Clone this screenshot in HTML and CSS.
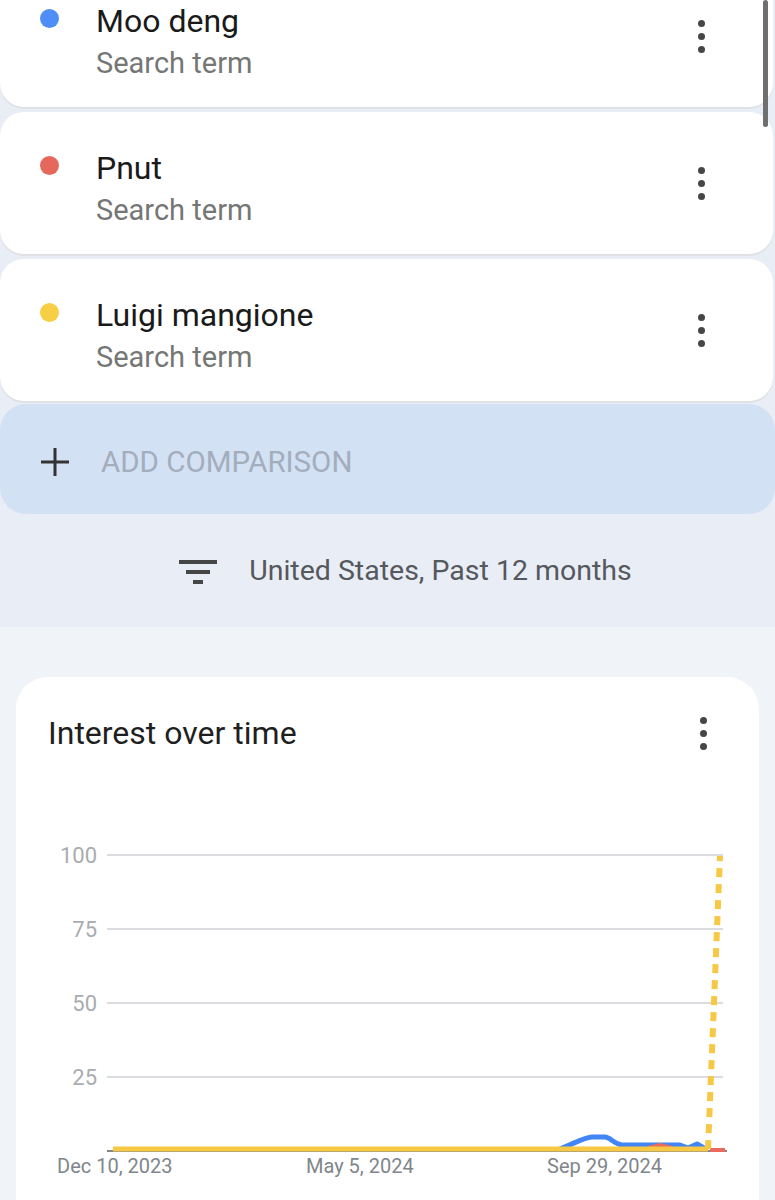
FILE: index.html
```html
<!DOCTYPE html>
<html lang="en">
  <head>
    <meta charset="utf-8" />
    <meta name="viewport" content="width=device-width,initial-scale=1.0" />
    <title>Explore - Google Trends</title>
    <link rel="stylesheet" href="styles.css">
  </head>
  <body>
    <div class="scrollbar"></div>

    <!-- compared terms -->
    <div class="top">
      <div class="terms">
        <div class="term">
          <span class="dot dot-blue"></span>
          <div class="term-text">
            <div class="term-name">Moo deng</div>
            <div class="term-kind">Search term</div>
          </div>
          <div class="kebab"><i></i><i></i><i></i></div>
        </div>
        <div class="term">
          <span class="dot dot-red"></span>
          <div class="term-text">
            <div class="term-name">Pnut</div>
            <div class="term-kind">Search term</div>
          </div>
          <div class="kebab"><i></i><i></i><i></i></div>
        </div>
        <div class="term">
          <span class="dot dot-yellow"></span>
          <div class="term-text">
            <div class="term-name">Luigi mangione</div>
            <div class="term-kind">Search term</div>
          </div>
          <div class="kebab"><i></i><i></i><i></i></div>
        </div>
      </div>

      <div class="add-comparison">
        <svg class="plus" width="30" height="30" viewBox="0 0 30 30">
          <path d="M15 1v28M1 15h28" stroke="#333" stroke-width="3" fill="none" />
        </svg>
        <span>ADD COMPARISON</span>
      </div>

      <div class="filters">
        <svg class="filter-icon" width="38" height="26" viewBox="0 0 38 26">
          <rect x="0" y="0" width="38" height="4" fill="#444746" />
          <rect x="7" y="10" width="24" height="4" fill="#444746" />
          <rect x="14" y="20" width="10" height="4" fill="#444746" />
        </svg>
        <span>United States, Past 12 months</span>
      </div>
    </div>

    <!-- interest over time -->
    <div class="bottom">
      <div class="chart-card">
        <div class="chart-head">
          <div class="chart-title">Interest over time</div>
          <div class="kebab"><i></i><i></i><i></i></div>
        </div>
        <svg class="chart" width="743" height="420" viewBox="16 780 743 420">
          <g stroke="#dadce0" stroke-width="2">
            <line x1="107" y1="855" x2="723" y2="855" />
            <line x1="107" y1="929" x2="723" y2="929" />
            <line x1="107" y1="1003" x2="723" y2="1003" />
            <line x1="107" y1="1077" x2="723" y2="1077" />
          </g>
          <line x1="107" y1="1151" x2="727" y2="1151" stroke="#80868b" stroke-width="2" />
          <g class="y-label" text-anchor="end">
            <text x="97" y="863">100</text>
            <text x="97" y="937">75</text>
            <text x="97" y="1011">50</text>
            <text x="97" y="1085">25</text>
          </g>
          <g class="x-label">
            <text x="57" y="1173">Dec 10, 2023</text>
            <text x="306" y="1173">May 5, 2024</text>
            <text x="547" y="1173">Sep 29, 2024</text>
          </g>
          <path d="M560 1149 C575 1143 585 1137 592 1137 L605 1137 C610 1137 614 1144 622 1145 L680 1145 L688 1148 L697 1144 L704 1148"
            fill="none" stroke="#4285f4" stroke-width="5" stroke-linejoin="round" />
          <polyline points="648,1148 660,1145 672,1148" fill="none" stroke="#ea6b5e" stroke-width="4" />
          <line x1="710" y1="1150" x2="725" y2="1150" stroke="#ea6b5e" stroke-width="4" />
          <line x1="113" y1="1149" x2="708" y2="1149" stroke="#f6c844" stroke-width="5" />
          <line x1="708" y1="1149" x2="720" y2="856" stroke="#f6c844" stroke-width="6" stroke-dasharray="9 7" />
        </svg>
      </div>
    </div>
  </body>
</html>
```

FILE: styles.css
```css
html, body {
  margin: 0;
  padding: 0;
}
body {
  background: #f0f3f8;
  font-family: Roboto, "Liberation Sans", sans-serif;
  color: #1f1f1f;
  overflow: hidden;
}
.scrollbar {
  position: absolute;
  top: 0;
  left: 763px;
  width: 5px;
  height: 127px;
  border-radius: 3px;
  background: #6f6f6f;
  z-index: 2;
}
.top {
  background: #e9eef6;
}
.terms {
  display: flex;
  flex-direction: column;
  gap: 5px;
  margin-top: -35px;
  margin-right: 2px;
}
.term {
  display: flex;
  align-items: flex-start;
  height: 142px;
  box-sizing: border-box;
  padding: 36px 0 0 40px;
  background: #fff;
  border-radius: 24px;
  box-shadow: 0 2px 0 #dfe1e5;
}
.dot {
  flex: none;
  width: 19px;
  height: 19px;
  margin-top: 8px;
  margin-right: 37px;
  border-radius: 50%;
}
.dot-blue { background: #4f8ef7; }
.dot-red { background: #e6685c; }
.dot-yellow { background: #f6cf45; }
.term-name {
  font-size: 32px;
  line-height: 40px;
  color: #1a1a1a;
}
.term-kind {
  font-size: 29px;
  line-height: 40px;
  margin-top: 2px;
  color: #757775;
}
.kebab {
  display: flex;
  flex-direction: column;
  gap: 6px;
  margin-left: auto;
}
.term .kebab {
  align-self: center;
  margin-top: -36px;
  margin-right: 68px;
}
.kebab i {
  display: block;
  width: 7px;
  height: 7px;
  border-radius: 50%;
  background: #444746;
}
.add-comparison {
  display: flex;
  align-items: center;
  height: 110px;
  margin-top: 3px;
  padding-left: 40px;
  background: #d3e1f5;
  border-radius: 26px;
  font-size: 29.5px;
  color: #a3adbc;
}
.add-comparison span {
  margin-top: 6px;
}
.plus {
  margin-right: 31px;
  margin-top: 6px;
}
.filters {
  display: flex;
  align-items: center;
  justify-content: center;
  height: 113px;
  padding-left: 36px;
  font-size: 28.5px;
  color: #55585c;
}
.filter-icon {
  margin-right: 32px;
  margin-top: 4px;
}
.bottom {
  padding: 50px 16px 0 16px;
}
.chart-card {
  background: #fff;
  border-radius: 32px;
  height: 560px;
}
.chart-head {
  display: flex;
  align-items: center;
  padding: 36px 52px 0 32px;
  height: 40px;
}
.chart-title {
  font-size: 32px;
  line-height: 40px;
  color: #1f1f1f;
}
.chart {
  display: block;
  margin-top: 27px;
}
.y-label {
  font-family: Roboto, "Liberation Sans", sans-serif;
  font-size: 22px;
  fill: #a9acaf;
}
.x-label {
  font-family: Roboto, "Liberation Sans", sans-serif;
  font-size: 20px;
  fill: #80868b;
}
```
